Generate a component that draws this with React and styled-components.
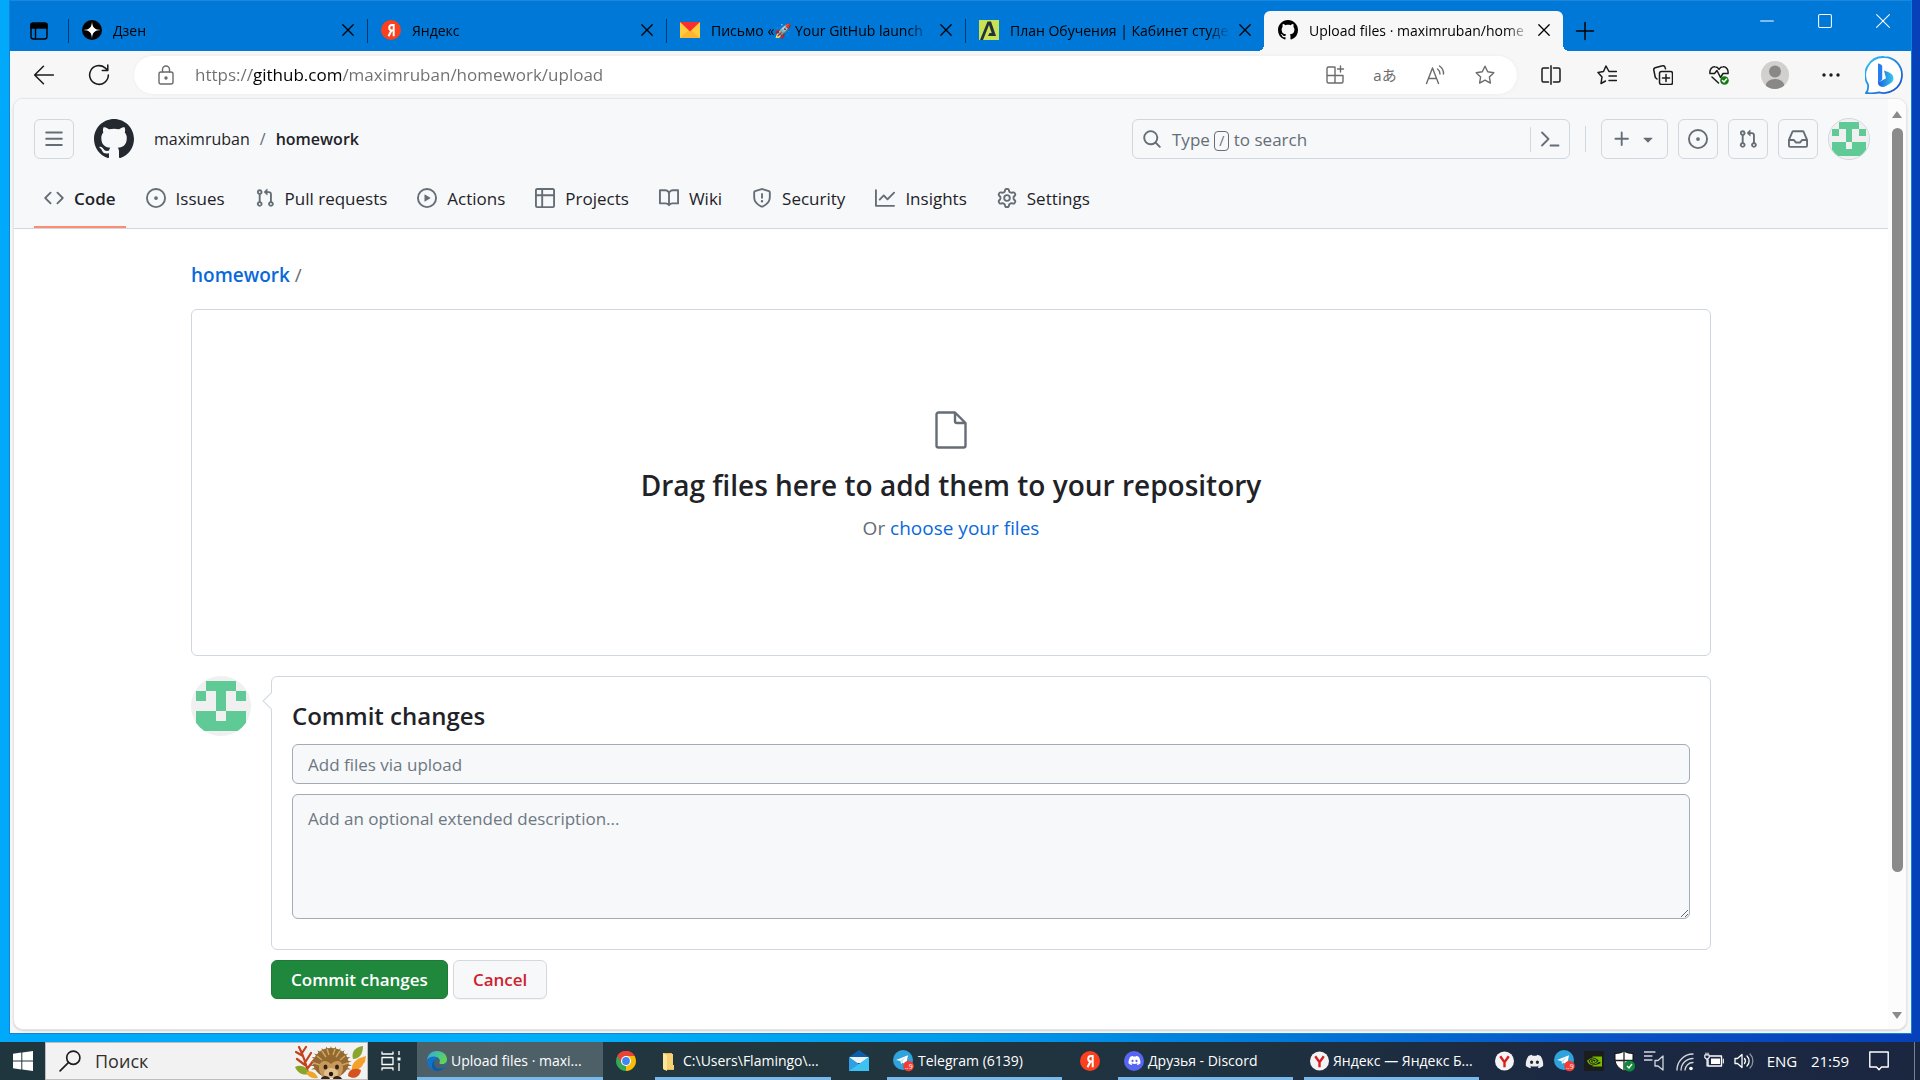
import React from "react";
import styled, { createGlobalStyle, css } from "styled-components";
import { FaDiscord } from "react-icons/fa";
import { SiNvidia } from "react-icons/si";

const GlobalStyle = createGlobalStyle`
  *, *::before, *::after { box-sizing: border-box; }
  html, body, #root { height: 100%; }
  body {
    margin: 0;
    font-family: "Open Sans", "Noto Sans", "Noto Sans CJK JP", sans-serif;
    font-size: 17px;
    color: #1f2328;
  }
  button, input, textarea { font: inherit; color: inherit; }
  button { cursor: pointer; }
  a { text-decoration: none; }
  svg { display: block; flex: none; }
`;

/* ---------- octicons ---------- */

const octicons = {
  code: "m11.28 3.22 4.25 4.25a.75.75 0 0 1 0 1.06l-4.25 4.25a.749.749 0 0 1-1.275-.326.749.749 0 0 1 .215-.734L13.94 8l-3.72-3.72a.749.749 0 0 1 .326-1.275.749.749 0 0 1 .734.215Zm-6.56 0a.751.751 0 0 1 1.042.018.751.751 0 0 1 .018 1.042L2.06 8l3.72 3.72a.749.749 0 0 1-.326 1.275.749.749 0 0 1-.734-.215L.47 8.53a.75.75 0 0 1 0-1.06Z",
  issue: "M8 9.5a1.5 1.5 0 1 0 0-3 1.5 1.5 0 0 0 0 3ZM8 0a8 8 0 1 1 0 16A8 8 0 0 1 8 0ZM1.5 8a6.5 6.5 0 1 0 13 0 6.5 6.5 0 0 0-13 0Z",
  pull: "M1.5 3.25a2.25 2.25 0 1 1 3 2.122v5.256a2.251 2.251 0 1 1-1.5 0V5.372A2.25 2.25 0 0 1 1.5 3.25Zm5.677-.177L9.573.677A.25.25 0 0 1 10 .854V2.5h1A2.5 2.5 0 0 1 13.5 5v5.628a2.251 2.251 0 1 1-1.5 0V5a1 1 0 0 0-1-1h-1v1.646a.25.25 0 0 1-.427.177L7.177 3.427a.25.25 0 0 1 0-.354ZM3.75 2.5a.75.75 0 1 0 0 1.5.75.75 0 0 0 0-1.5Zm0 9.5a.75.75 0 1 0 0 1.5.75.75 0 0 0 0-1.5Zm8.25.75a.75.75 0 1 0 1.5 0 .75.75 0 0 0-1.5 0Z",
  play: "M8 0a8 8 0 1 1 0 16A8 8 0 0 1 8 0ZM1.5 8a6.5 6.5 0 1 0 13 0 6.5 6.5 0 0 0-13 0Zm4.879-2.773 4.264 2.559a.25.25 0 0 1 0 .428l-4.264 2.559A.25.25 0 0 1 6 10.559V5.442a.25.25 0 0 1 .379-.215Z",
  table: "M0 1.75C0 .784.784 0 1.75 0h12.5C15.216 0 16 .784 16 1.75v12.5A1.75 1.75 0 0 1 14.25 16H1.75A1.75 1.75 0 0 1 0 14.25ZM6.5 6.5v8h7.75a.25.25 0 0 0 .25-.25V6.5Zm8-1.5V1.75a.25.25 0 0 0-.25-.25H6.5V5Zm-13 1.5v7.75c0 .138.112.25.25.25H5v-8ZM5 5V1.5H1.75a.25.25 0 0 0-.25.25V5Z",
  book: "M0 1.75A.75.75 0 0 1 .75 1h4.253c1.227 0 2.317.59 3 1.501A3.743 3.743 0 0 1 11.006 1h4.245a.75.75 0 0 1 .75.75v10.5a.75.75 0 0 1-.75.75h-4.507a2.25 2.25 0 0 0-1.591.659l-.622.621a.75.75 0 0 1-1.06 0l-.622-.621A2.25 2.25 0 0 0 5.258 13H.75a.75.75 0 0 1-.75-.75Zm7.251 10.324.004-5.073-.002-2.253A2.25 2.25 0 0 0 5.003 2.5H1.5v9h3.757a3.75 3.75 0 0 1 1.994.574ZM8.755 4.75l-.004 7.322a3.752 3.752 0 0 1 1.992-.572H14.5v-9h-3.495a2.25 2.25 0 0 0-2.25 2.25Z",
  shield: "M7.467.133a1.748 1.748 0 0 1 1.066 0l5.25 1.68A1.75 1.75 0 0 1 15 3.48V7c0 1.566-.32 3.182-1.303 4.682-.983 1.498-2.585 2.813-5.032 3.855a1.697 1.697 0 0 1-1.33 0c-2.447-1.042-4.049-2.357-5.032-3.855C1.32 10.182 1 8.566 1 7V3.48a1.75 1.75 0 0 1 1.217-1.667Zm.61 1.429a.25.25 0 0 0-.153 0l-5.25 1.68a.25.25 0 0 0-.174.238V7c0 1.358.275 2.666 1.057 3.86.784 1.194 2.121 2.34 4.366 3.297a.196.196 0 0 0 .154 0c2.245-.956 3.582-2.104 4.366-3.298C13.225 9.666 13.5 8.36 13.5 7V3.48a.251.251 0 0 0-.174-.237l-5.25-1.68ZM8.75 4.75v3a.75.75 0 0 1-1.5 0v-3a.75.75 0 0 1 1.5 0ZM9 10.5a1 1 0 1 1-2 0 1 1 0 0 1 2 0Z",
  graph: "M1.5 1.75V13.5h13.75a.75.75 0 0 1 0 1.5H.75a.75.75 0 0 1-.75-.75V1.75a.75.75 0 0 1 1.5 0Zm14.28 2.53-5.25 5.25a.75.75 0 0 1-1.06 0L7 7.06 4.28 9.78a.751.751 0 0 1-1.042-.018.751.751 0 0 1-.018-1.042l3.25-3.25a.75.75 0 0 1 1.06 0L10 7.94l4.72-4.72a.751.751 0 0 1 1.042.018.751.751 0 0 1 .018 1.042Z",
  gear: "M8 0a8.2 8.2 0 0 1 .701.031C9.444.095 9.99.645 10.16 1.29l.288 1.107c.018.066.079.158.212.224.231.114.454.243.668.386.123.082.233.09.299.071l1.103-.303c.644-.176 1.392.021 1.82.63.27.385.506.792.704 1.218.315.675.111 1.422-.364 1.891l-.814.806c-.049.048-.098.147-.088.294.016.257.016.515 0 .772-.01.147.038.246.088.294l.814.806c.475.469.679 1.216.364 1.891a7.977 7.977 0 0 1-.704 1.217c-.428.61-1.176.807-1.82.63l-1.102-.302c-.067-.019-.177-.011-.3.071a5.909 5.909 0 0 1-.668.386c-.133.066-.194.158-.211.224l-.29 1.106c-.168.646-.715 1.196-1.458 1.26a8.006 8.006 0 0 1-1.402 0c-.743-.064-1.289-.614-1.458-1.26l-.289-1.106c-.018-.066-.079-.158-.212-.224a5.738 5.738 0 0 1-.668-.386c-.123-.082-.233-.09-.299-.071l-1.103.303c-.644.176-1.392-.021-1.82-.63a8.12 8.12 0 0 1-.704-1.218c-.315-.675-.111-1.422.363-1.891l.815-.806c.05-.048.098-.147.088-.294a6.214 6.214 0 0 1 0-.772c.01-.147-.038-.246-.088-.294l-.815-.806C.635 6.045.431 5.298.746 4.623a7.92 7.92 0 0 1 .704-1.217c.428-.61 1.176-.807 1.82-.63l1.102.302c.067.019.177.011.3-.071.214-.143.437-.272.668-.386.133-.066.194-.158.211-.224l.29-1.106C6.009.645 6.556.095 7.299.03 7.53.01 7.764 0 8 0Zm-.571 1.525c-.036.003-.108.036-.137.146l-.289 1.105c-.147.561-.549.967-.998 1.189-.173.086-.34.183-.5.29-.417.278-.97.423-1.529.27l-1.103-.303c-.109-.03-.175.016-.195.045-.22.312-.412.644-.573.99-.014.031-.021.11.059.19l.815.806c.411.406.562.957.53 1.456a4.709 4.709 0 0 0 0 .582c.032.499-.119 1.05-.53 1.456l-.815.806c-.081.08-.073.159-.059.19.162.346.353.677.573.989.02.03.085.076.195.046l1.102-.303c.56-.153 1.113-.008 1.53.27.161.107.328.204.501.29.447.222.85.629.997 1.189l.289 1.105c.029.109.101.143.137.146a6.6 6.6 0 0 0 1.142 0c.036-.003.108-.036.137-.146l.289-1.105c.147-.561.549-.967.998-1.189.173-.086.34-.183.5-.29.417-.278.97-.423 1.529-.27l1.103.303c.109.029.175-.016.195-.045.22-.313.411-.644.573-.99.014-.031.021-.11-.059-.19l-.815-.806c-.411-.406-.562-.957-.53-1.456a4.709 4.709 0 0 0 0-.582c-.032-.499.119-1.05.53-1.456l.815-.806c.081-.08.073-.159.059-.19a6.464 6.464 0 0 0-.573-.989c-.02-.03-.085-.076-.195-.046l-1.102.303c-.56.153-1.113.008-1.53-.27a4.44 4.44 0 0 0-.501-.29c-.447-.222-.85-.629-.997-1.189l-.289-1.105c-.029-.11-.101-.143-.137-.146a6.6 6.6 0 0 0-1.142 0ZM11 8a3 3 0 1 1-6 0 3 3 0 0 1 6 0ZM9.5 8a1.5 1.5 0 1 0-3.001.001A1.5 1.5 0 0 0 9.5 8Z",
  inbox: "M2.8 2.06A1.75 1.75 0 0 1 4.41 1h7.18c.7 0 1.333.417 1.61 1.06l2.74 6.395c.04.093.06.194.06.295v4.5A1.75 1.75 0 0 1 14.25 15H1.75A1.75 1.75 0 0 1 0 13.25v-4.5c0-.101.02-.202.06-.295Zm1.61.44a.25.25 0 0 0-.23.152L1.887 8H4.75a.75.75 0 0 1 .6.3L6.625 10h2.75l1.275-1.7a.75.75 0 0 1 .6-.3h2.863L11.82 2.652a.25.25 0 0 0-.23-.152Zm10.09 7h-2.875l-1.275 1.7a.75.75 0 0 1-.6.3h-3.5a.75.75 0 0 1-.6-.3L4.375 9.5H1.5v3.75c0 .138.112.25.25.25h12.5a.25.25 0 0 0 .25-.25Z",
  search: "M10.68 11.74a6 6 0 0 1-7.922-8.982 6 6 0 0 1 8.982 7.922l3.04 3.04a.749.749 0 0 1-.326 1.275.749.749 0 0 1-.734-.215ZM11.5 7a4.499 4.499 0 1 0-8.997 0A4.499 4.499 0 0 0 11.5 7Z",
  mark: "M8 0c4.42 0 8 3.58 8 8a8.013 8.013 0 0 1-5.45 7.59c-.4.08-.55-.17-.55-.38 0-.27.01-1.13.01-2.2 0-.75-.25-1.23-.54-1.48 1.78-.2 3.65-.88 3.65-3.95 0-.88-.31-1.59-.82-2.15.08-.2.36-1.02-.08-2.12 0 0-.67-.22-2.2.82-.64-.18-1.32-.27-2-.27-.68 0-1.36.09-2 .27-1.53-1.03-2.2-.82-2.2-.82-.44 1.1-.16 1.92-.08 2.12-.51.56-.82 1.28-.82 2.15 0 3.06 1.86 3.75 3.64 3.95-.23.2-.44.55-.51 1.07-.46.21-1.61.55-2.33-.66-.15-.24-.6-.83-1.23-.82-.67.01-.27.38.01.53.34.19.73.9.82 1.13.16.45.68 1.31 2.69.94 0 .67.01 1.3.01 1.49 0 .21-.15.45-.55.38A7.995 7.995 0 0 1 0 8c0-4.42 3.58-8 8-8Z",
  bars: "M1 2.75A.75.75 0 0 1 1.75 2h12.5a.75.75 0 0 1 0 1.5H1.75A.75.75 0 0 1 1 2.75Zm0 5A.75.75 0 0 1 1.75 7h12.5a.75.75 0 0 1 0 1.5H1.75A.75.75 0 0 1 1 7.75ZM1.75 12h12.5a.75.75 0 0 1 0 1.5H1.75a.75.75 0 0 1 0-1.5Z",
  plus: "M7.75 2a.75.75 0 0 1 .75.75V7h4.25a.75.75 0 0 1 0 1.5H8.5v4.25a.75.75 0 0 1-1.5 0V8.5H2.75a.75.75 0 0 1 0-1.5H7V2.75A.75.75 0 0 1 7.75 2Z",
  caret: "m4.427 7.427 3.396 3.396a.25.25 0 0 0 .354 0l3.396-3.396A.25.25 0 0 0 11.396 7H4.604a.25.25 0 0 0-.177.427Z",
};

const Octicon = ({ name, size = 20 }) => (
  <svg width={size} height={size} viewBox="0 0 16 16" fill="currentColor" aria-hidden="true">
    <path d={octicons[name]} />
  </svg>
);

/* Thin-stroke glyph used by the browser chrome and the tray */
const Line = ({ size = 20, w = 1.4, children }) => (
  <svg
    width={size}
    height={size}
    viewBox="0 0 20 20"
    fill="none"
    stroke="currentColor"
    strokeWidth={w}
    strokeLinecap="round"
    strokeLinejoin="round"
    aria-hidden="true"
  >
    {children}
  </svg>
);

const identiconCells = [
  [1, 0], [2, 0], [3, 0],
  [0, 1], [2, 1], [4, 1],
  [2, 2],
  [0, 3], [1, 3], [3, 3], [4, 3],
  [0, 4], [1, 4], [2, 4], [3, 4], [4, 4],
];

const Identicon = ({ size }) => (
  <svg width={size} height={size} viewBox="0 0 60 60" shapeRendering="crispEdges" aria-hidden="true">
    <rect width="60" height="60" fill="#f0f0f0" />
    {identiconCells.map(([x, y]) => (
      <rect key={`${x}-${y}`} x={5 + x * 10} y={5 + y * 10} width="10" height="10" fill="#5fca96" />
    ))}
  </svg>
);

/* ---------- shell ---------- */

const Desktop = styled.div`
  min-height: 100%;
  display: flex;
  flex-direction: column;
  background: linear-gradient(90deg, #00a9fa 0%, #00aef8 30%, #009cec 50%, #0078d8 67%, #0a50c4 85%, #0540b8 100%);
`;

const BrowserWindow = styled.section`
  flex: 1;
  display: flex;
  flex-direction: column;
  margin: 0 8px 8px 9px;
  background: #f7f7f7;
  border: 1px solid #1084dc;
  border-top-color: #1a86dc;
`;

const IconButton = styled.button`
  display: grid;
  place-items: center;
  width: ${(p) => p.$w || 32}px;
  height: ${(p) => p.$h || 32}px;
  flex: none;
  padding: 0;
  border: 0;
  background: none;
  font-size: 15px;
  color: ${(p) => p.$color || "#1b1b1b"};
`;

/* ---------- tab strip ---------- */

const TabStrip = styled.div`
  display: flex;
  align-items: flex-end;
  height: 50px;
  background: #0078d7;
  padding-left: 6px;
`;

const TabActions = styled.div`
  display: flex;
  align-items: center;
  height: 40px;
  width: 52px;
  padding-left: 7px;
`;

const Tab = styled.div`
  position: relative;
  display: flex;
  align-items: center;
  flex: 0 1 299px;
  min-width: 0;
  height: 40px;
  padding: 0 5px 2px 14px;
  font-size: 14px;
  color: #000;

  &::before {
    content: "";
    position: absolute;
    left: 0;
    top: 8px;
    height: 24px;
    width: 1px;
    background: #003a6c;
  }

  ${(p) =>
    p.$active &&
    css`
      background: #f7f7f7;
      border-radius: 6px 6px 0 0;
      &::before {
        top: auto;
        bottom: 0;
        left: -6px;
        width: 6px;
        height: 6px;
        background: radial-gradient(circle at 0 0, transparent 6px, #f7f7f7 6px);
      }
      &::after {
        content: "";
        position: absolute;
        bottom: 0;
        right: -6px;
        width: 6px;
        height: 6px;
        background: radial-gradient(circle at 100% 0, transparent 6px, #f7f7f7 6px);
      }
    `}
`;

const TabTitle = styled.button`
  display: flex;
  align-items: center;
  gap: 11px;
  flex: 1;
  min-width: 0;
  height: 100%;
  padding: 0;
  border: 0;
  background: none;
  text-align: left;
`;

const TabText = styled.span`
  flex: 1;
  overflow: hidden;
  white-space: nowrap;
  mask-image: linear-gradient(90deg, #000 calc(100% - 24px), transparent);
`;

const WindowControls = styled.div`
  display: flex;
  align-self: flex-start;
  margin-left: auto;
`;

const CloseGlyph = () => (
  <Line size={16} w={1.6}>
    <path d="M3.500 3.500 16.500 16.500M16.500 3.500 3.500 16.500" />
  </Line>
);

const ZenIcon = () => (
  <svg width="20" height="20" viewBox="0 0 20 20" aria-hidden="true">
    <circle cx="10" cy="10" r="10" fill="#000" />
    <path d="M10 1c.2 6.500 2.500 8.800 9 9-6.500.2-8.800 2.500-9 9-.2-6.500-2.500-8.800-9-9 6.500-.2 8.800-2.500 9-9Z" fill="#fff" />
  </svg>
);

const YandexIcon = () => (
  <svg width="20" height="20" viewBox="0 0 20 20" aria-hidden="true">
    <circle cx="10" cy="10" r="10" fill="#fc3f1d" />
    <path d="M12.700 4v12.300M12.700 4.900h-1.700c-3.700 0-3.700 5.600 0 5.600h1.700M10.400 10.500 7.500 16.300" fill="none" stroke="#fff" strokeWidth="2" />
  </svg>
);

const MailTabIcon = () => (
  <svg width="20" height="20" viewBox="0 0 20 20" aria-hidden="true">
    <path d="M0 2h20v16H0z" fill="#ffcc3d" />
    <path d="M0 18h20L10 9Z" fill="#ffb52e" />
    <path d="M0 2h20L10 11.500Z" fill="#f8312f" />
  </svg>
);

const PlanIcon = () => (
  <svg width="20" height="20" viewBox="0 0 20 20" aria-hidden="true">
    <path d="M0 0h20v20H0z" fill="#c5e352" />
    <path d="M1 20 8.500 1.500h3.500L17 16H9l1.500-3h2.200L10 5 4 20Z" fill="#263038" />
  </svg>
);

const tabs = [
  { icon: <ZenIcon />, title: "Дзен" },
  { icon: <YandexIcon />, title: "Яндекс" },
  { icon: <MailTabIcon />, title: "Письмо «🚀 Your GitHub launch" },
  { icon: <PlanIcon />, title: "План Обучения | Кабинет студе" },
  { icon: <Octicon name="mark" />, title: "Upload files · maximruban/home", active: true },
];

/* ---------- address bar ---------- */

const Toolbar = styled.div`
  display: flex;
  align-items: center;
  height: 47px;
  padding-left: 6px;
  padding-right: 2px;
`;

const NavButtons = styled.div`
  display: flex;
  width: 118px;
`;

const Omnibox = styled.form`
  display: flex;
  align-items: center;
  flex: 1;
  height: 38px;
  padding: 0 7px 0 16px;
  border-radius: 19px;
  background: #fff;
  box-shadow: 0 0 4px #0000000d;
`;

const UrlInput = styled.input`
  flex: 1;
  min-width: 0;
  padding: 0;
  margin-left: 13px;
  border: 0;
  outline: 0;
  font-size: 17px;
  color: transparent;
  background: linear-gradient(90deg, #6f6f6f 57px, #000 57px, #000 147px, #6f6f6f 147px);
  background-clip: text;
`;

const ToolGroup = styled.div`
  display: flex;
  align-items: center;
  padding-left: 6px;
`;

const Profile = styled.span`
  display: block;
  width: 28px;
  height: 28px;
  border-radius: 50%;
  overflow: hidden;
`;

/* ---------- viewport ---------- */

const Viewport = styled.div`
  flex: 1;
  display: flex;
  margin: 0 4px 3px 3px;
  border: 1px solid #e6e6e6;
  border-radius: 10px;
  overflow: hidden;
  background: #fff;
  box-shadow: 0 1px 2px #00000026;
`;

const Page = styled.div`
  flex: 1;
  min-width: 0;
`;

const ScrollTrack = styled.div`
  display: flex;
  flex-direction: column;
  align-items: center;
  width: 18px;
  padding: 12px 0 10px;
  background: #fcfcfc;
  color: #8b8b8b;
`;

const Thumb = styled.div`
  flex: 747;
  width: 11px;
  margin-top: 10px;
  border-radius: 6px;
  background: currentColor;
`;

const TrackRest = styled.div`
  flex: 140;
`;

const Arrow = styled.span`
  border: 5px solid transparent;
  ${(p) => (p.$up ? "border-top: 0; border-bottom: 7px solid currentColor;" : "border-bottom: 0; border-top: 7px solid currentColor;")}
`;

const Header = styled.header`
  background: #f6f8fa;
  border-bottom: 1px solid #d0d7de;
`;

const HeaderRow = styled.div`
  display: flex;
  align-items: center;
  gap: 10px;
  padding: 19px 18px 0 20px;
`;

const HeaderButton = styled.button`
  display: flex;
  align-items: center;
  justify-content: center;
  gap: 6px;
  width: ${(p) => (p.$wide ? 67 : 40)}px;
  height: 40px;
  flex: none;
  padding: 0;
  border: 1px solid #d0d7de;
  border-radius: 6px;
  background: #f6f8fa;
  color: #656d76;
`;

const LogoLink = styled.a`
  color: #24292f;
  margin: 0 10px;
`;

const Breadcrumb = styled.nav`
  display: flex;
  gap: 10px;
  margin-right: auto;
  font-size: 16px;
  color: #656d76;
  a { color: #1f2328; }
  a:last-child { font-weight: 600; }
`;

const SearchBox = styled.div`
  display: flex;
  align-items: center;
  width: 438px;
  height: 40px;
  border: 1px solid #d0d7de;
  border-radius: 6px;
  color: #656d76;
`;

const SearchButton = styled.button`
  display: flex;
  align-items: center;
  gap: 10px;
  flex: 1;
  padding: 0 9px;
  border: 0;
  background: none;
`;

const Kbd = styled.kbd`
  display: inline-block;
  font: inherit;
  font-size: 14px;
  line-height: 18px;
  padding: 0 4px;
  border: 1px solid #656d76;
  border-radius: 4px;
`;

const CommandButton = styled.button`
  display: grid;
  place-items: center;
  width: 39px;
  height: 25px;
  padding: 0;
  border: 0;
  border-left: 1px solid #d0d7de;
  background: none;
`;

const Divider = styled.span`
  width: 1px;
  height: 26px;
  margin: 0 5px;
  background: #d0d7de;
`;

const AvatarButton = styled.button`
  display: block;
  width: ${(p) => p.$size}px;
  height: ${(p) => p.$size}px;
  padding: 0;
  border: 1px solid #d0d7de;
  border-radius: 50%;
  overflow: hidden;
  flex: none;
`;

const RepoNav = styled.nav`
  display: flex;
  gap: 10px;
  padding: 10px 20px 0;
`;

const RepoTab = styled.a`
  display: flex;
  align-items: center;
  gap: 10px;
  height: 58px;
  padding: 0 10px;
  color: #1f2328;
  border-bottom: 2px solid ${(p) => (p.$active ? "#fd8c73" : "transparent")};
  font-weight: ${(p) => (p.$active ? 600 : 400)};
  svg { color: #656d76; }
`;

const repoTabs = [
  ["code", "Code"],
  ["issue", "Issues"],
  ["pull", "Pull requests"],
  ["play", "Actions"],
  ["table", "Projects"],
  ["book", "Wiki"],
  ["shield", "Security"],
  ["graph", "Insights"],
  ["gear", "Settings"],
];

/* ---------- upload page ---------- */

const Main = styled.main`
  max-width: 1600px;
  margin: 0 auto;
  padding: 31px 40px 0;
`;

const PathLine = styled.nav`
  font-size: 19px;
  line-height: 30px;
  margin-bottom: 19px;
  color: #656d76;
  a { color: #0969da; font-weight: 600; }
`;

const DropZone = styled.section`
  display: flex;
  flex-direction: column;
  align-items: center;
  padding: 100px 20px 107px;
  border: 1px solid #d0d7de;
  border-radius: 6px;
  svg { color: #656d76; }
`;

const DropTitle = styled.h1`
  margin: 13px 0 0;
  font-size: 28px;
  line-height: 45px;
  font-weight: 600;
`;

const DropHint = styled.p`
  margin: 0;
  font-size: 19px;
  line-height: 40px;
  color: #656d76;
  label { color: #0969da; cursor: pointer; }
  input { display: none; }
`;

const CommitRow = styled.form`
  display: flex;
  align-items: flex-start;
  gap: 20px;
  margin-top: 20px;
`;

const Round = styled.span`
  display: block;
  width: 60px;
  height: 60px;
  border-radius: 50%;
  overflow: hidden;
`;

const CommitColumn = styled.div`
  flex: 1;
  min-width: 0;
`;

const CommitBox = styled.div`
  position: relative;
  display: flex;
  flex-direction: column;
  gap: 10px;
  padding: 20px 20px 30px;
  border: 1px solid #d0d7de;
  border-radius: 6px;

  &::before {
    content: "";
    position: absolute;
    left: -7px;
    top: 18px;
    width: 12px;
    height: 12px;
    border-left: 1px solid #d0d7de;
    border-bottom: 1px solid #d0d7de;
    background: #fff;
    transform: rotate(45deg);
  }
`;

const CommitTitle = styled.h2`
  margin: 0;
  font-size: 24px;
  line-height: 37px;
  font-weight: 600;
`;

const field = css`
  width: 100%;
  border: 1px solid #a2abb6;
  border-radius: 6px;
  background: #f6f8fa;
  padding: 0 15px;
  outline: 0;
  &::placeholder { color: #6e7781; opacity: 1; }
`;

const SummaryInput = styled.input`
  ${field}
  height: 40px;
`;

const DescriptionInput = styled.textarea`
  ${field}
  display: block;
  height: 125px;
  padding-top: 11px;
  line-height: 26px;
  resize: vertical;
`;

const Actions = styled.div`
  display: flex;
  gap: 5px;
  margin-top: 10px;
`;

const ActionButton = styled.button`
  height: 39px;
  padding: 0 19px;
  border: 1px solid ${(p) => (p.$primary ? "#1c7c37" : "#d5d9de")};
  border-radius: 6px;
  font-size: 17px;
  background: ${(p) => (p.$primary ? "#1f883d" : "#f6f8fa")};
  color: ${(p) => (p.$primary ? "#fff" : "#cf222e")};
  font-weight: 600;
  box-shadow: 0 1px 0 #1f23280a;
`;

/* ---------- taskbar ---------- */

const Taskbar = styled.footer`
  display: flex;
  height: 38px;
  color: #fff;
  font-size: 15px;
  background: linear-gradient(90deg, #20363f 0%, #22363f 40%, #1e3140 66%, #1b2842 82%, #1b2740 100%);
`;

const TaskSearch = styled.label`
  display: flex;
  align-items: center;
  gap: 14px;
  width: 323px;
  padding-left: 13px;
  border: 1px solid #bdbdbd;
  background: #f2f2f2;
  color: #1c1c1c;
  input {
    flex: 1;
    min-width: 0;
    padding: 0;
    border: 0;
    outline: 0;
    background: none;
    font-size: 18px;
  }
  input::placeholder { color: #303030; opacity: 1; }
`;

const TaskButton = styled.button`
  display: flex;
  align-items: center;
  gap: 4px;
  width: ${(p) => p.$w}px;
  flex: none;
  padding: 2px 6px 0;
  border: 0;
  border-bottom: 3px solid ${(p) => (p.$open ? "#76b9ed" : "transparent")};
  background: ${(p) => (p.$active ? "#4d6068" : "none")};
  color: #fff;
  font-size: 14px;
  white-space: nowrap;
  ${(p) => p.$center && "justify-content: center;"}
  ${(p) => p.$active && "padding-left: 10px;"}
`;

const TaskGap = styled.span`
  width: ${(p) => p.$w}px;
`;

const Tray = styled.div`
  display: flex;
  align-items: center;
  margin-left: auto;
`;

const TrayText = styled.button`
  width: ${(p) => p.$w}px;
  padding: 0;
  border: 0;
  background: none;
  text-align: center;
`;

const ShowDesktop = styled.button`
  width: 6px;
  height: 100%;
  margin-left: 11px;
  padding: 0;
  border: 0;
  border-left: 1px solid #77808f;
  background: none;
`;

const Hedgehog = () => {
  const spikes = Array.from({ length: 17 }, (_, i) => {
    const a = Math.PI * (0.9 + (i * 1.2) / 16);
    const p = (r, d) => `${36 + r * Math.cos(a + d)},${21 + r * 0.86 * Math.sin(a + d)}`;
    return <polygon key={i} points={`${p(21, 0)} ${p(14, 0.16)} ${p(14, -0.16)}`} fill={i % 2 ? "#8b6331" : "#a57a3e"} />;
  });
  return (
    <svg width="72" height="36" viewBox="0 0 72 36" aria-hidden="true">
      <path d="M13 30C11 20 8 12 4 4M10 22 2 16M11 18l5-8M8 13 1 9M7 10l4-6M12 26l7-9" stroke="#c2431b" strokeWidth="2.200" strokeLinecap="round" fill="none" />
      <path d="M0 24c6-3 12 0 15 7C7 33 3 30 0 24Z" fill="#8aa329" />
      <path d="M11 29c5-2 10 1 12 6-6 1-10-1-12-6Z" fill="#efa52a" />
      {spikes}
      <ellipse cx="36" cy="20" rx="17.500" ry="15" fill="#94692f" />
      <path d="M22 13l5 4M27 8l4 6M32 6l2 6M40 6l-2 6M45 8l-4 6M50 13l-5 4M19 20l6 2M53 20l-6 2" stroke="#cda461" strokeWidth="1.500" />
      <path d="M24 25c0-8 7-9 12-4 5-5 12-4 12 4 0 7-5 10-12 10s-12-3-12-10Z" fill="#c79a5c" />
      <ellipse cx="36" cy="30" rx="7" ry="5" fill="#e2c08b" />
      <ellipse cx="30.500" cy="24" rx="2" ry="2.600" fill="#352015" />
      <ellipse cx="42" cy="24" rx="2" ry="2.600" fill="#352015" />
      <circle cx="36" cy="31" r="2.200" fill="#201510" />
      <path d="M26 36c0-4 8-4 9 0ZM38 36c0-4 8-4 9 0Z" fill="#3a231a" />
      <path d="M58 16c-2-7 2-12 10-13 0 7-3 13-10 13Z" fill="#8aa52d" />
      <path d="M57 28c-1-8 4-10 6-12 3-2 6-2 8-3-1 4 0 6-3 8-1 4-6 6-11 7Z" fill="#f5a02b" />
      <path d="M53 33c0-6 6-9 13-6-1 7-7 10-13 6Z" fill="#d3541f" />
    </svg>
  );
};

const EdgeIcon = () => (
  <svg width="20" height="20" viewBox="0 0 20 20" aria-hidden="true">
    <defs>
      <linearGradient id="edgeTop" x1="0" y1="0" x2="1" y2="0.500">
        <stop offset="0" stopColor="#2aa9e8" />
        <stop offset="1" stopColor="#62d553" />
      </linearGradient>
    </defs>
    <circle cx="10" cy="10" r="10" fill="#1272c8" />
    <path d="M0 9C1 3 5 0 10 0c6 0 10 4 10 8.500 0 3-2.500 4.800-5.200 4.800-2 0-3-.8-2.600-1.600.6-1 .8-1.800.4-3C11.800 6.600 9.500 5.500 6.500 5.500 3.500 5.500 1 7 0 9Z" fill="url(#edgeTop)" />
    <path d="M7 12c0-2.500 1.500-4.200 3.200-4.800 2 .5 3 2.400 2 4.500-.4.800.6 1.600 2.600 1.600 1.500 0 2.700-.4 3.500-1 .8 2-2.300 5.400-5.800 5.400C9 17.700 7 15 7 12Z" fill="#4d6068" />
    <path d="M7 12c0 3 2 5.700 5.500 5.700 2 0 4-.9 5.300-2C16.200 18.500 13.400 20 10 20c-3 0-5-2.500-5-5.500C5 12 6.500 9.500 9 7.800 7.800 9 7 10.500 7 12Z" fill="#0c5aa6" />
  </svg>
);

const ChromeIcon = () => (
  <svg width="20" height="20" viewBox="0 0 20 20" aria-hidden="true">
    <path d="M10 10 1.340 5A10 10 0 0 1 18.660 5Z" fill="#ea4335" />
    <path d="M10 10 18.660 5A10 10 0 0 1 10 20Z" fill="#fbbc05" />
    <path d="M10 10V20A10 10 0 0 1 1.340 5Z" fill="#34a853" />
    <path d="M10 5h8.660L13.800 13 10 10Z" fill="#fbbc05" />
    <path d="M10 5h8.660A10 10 0 0 0 1.340 5l4.300 7Z" fill="#ea4335" />
    <circle cx="10" cy="10" r="5" fill="#fff" />
    <circle cx="10" cy="10" r="3.900" fill="#4285f4" />
  </svg>
);

const FolderIcon = () => (
  <svg width="18" height="20" viewBox="0 0 18 20" aria-hidden="true">
    <path d="M2 2h9v12h2v5H3Z" fill="#e9bb55" />
    <path d="M2 2l4 2v16l-4-2Z" fill="#ffe59a" />
    <path d="M6 3h6v11h1v4H6Z" fill="#f7d274" />
  </svg>
);

const MailIcon = () => (
  <svg width="20" height="22" viewBox="0 0 20 22" aria-hidden="true">
    <path d="M0 7 10 0l10 7v3H0Z" fill="#0a5fa8" />
    <path d="M1 7h18v6H1Z" fill="#f1f1f1" />
    <path d="M0 7l10 7L20 7v14H0Z" fill="#2f9fe4" />
    <path d="M0 21 20 7v14Z" fill="#3dc2f4" />
  </svg>
);

const TelegramIcon = () => (
  <svg width="21" height="22" viewBox="0 0 21 22" aria-hidden="true">
    <circle cx="10" cy="10" r="10" fill="#2ea3dc" />
    <path d="M3 10 15 5.200 13 15l-3.500-2.500L8 14l-.5-3Z" fill="#fff" />
    <path d="m7.500 11 5-4-3.500 5Z" fill="#b9d9ec" />
    <circle cx="15.500" cy="16" r="5.300" fill="#f23c34" />
    <text x="12" y="19" fontSize="7" fill="#fff" fontFamily="Open Sans">..9</text>
  </svg>
);

const DiscordBadge = styled.span`
  display: grid;
  place-items: center;
  width: 20px;
  height: 20px;
  border-radius: 50%;
  background: #5865f2;
`;

const YBrowserIcon = () => (
  <svg width="19" height="20" viewBox="0 0 20 20" aria-hidden="true">
    <circle cx="10" cy="10" r="10" fill="#f4f4f4" />
    <path d="M5.500 5 10 11.200 14.500 5M10 11v5.500" fill="none" stroke="#d6201f" strokeWidth="2.500" />
  </svg>
);

const NvidiaBadge = styled.span`
  display: grid;
  place-items: center;
  width: 20px;
  height: 20px;
  background: #1b1d1c;
  color: #76b900;
`;

const DefenderIcon = () => (
  <svg width="21" height="21" viewBox="0 0 21 21" aria-hidden="true">
    <path d="M10 0c2.500 1.800 5.500 2.500 9 2.500V8c0 6-4 9.500-9 12C5 17.500 1 14 1 8V2.500C4.500 2.500 7.500 1.800 10 0Z" fill="#fff" stroke="#111" />
    <path d="M10 1v18M1 9.500h18" stroke="#222" strokeWidth="1.300" />
    <circle cx="15.500" cy="15" r="5.500" fill="#10893e" />
    <path d="m13 15 2 2 3-4" fill="none" stroke="#fff" strokeWidth="1.300" />
  </svg>
);

const WindowsIcon = () => (
  <svg width="20" height="20" viewBox="0 0 20 20" fill="#fff" aria-hidden="true">
    <path d="M0 2.800 8.300 1.600v7.900H0ZM9.300 1.500 20 0v9.500H9.300ZM0 10.500h8.300v7.900L0 17.200ZM9.300 10.500H20V20L9.300 18.500Z" />
  </svg>
);

const BingIcon = () => (
  <svg width="38" height="38" viewBox="0 0 38 38" aria-hidden="true">
    <defs>
      <linearGradient id="bingRing" x1="0" y1="0" x2="1" y2="1">
        <stop offset="0" stopColor="#2bc5f5" />
        <stop offset="1" stopColor="#1b49c9" />
      </linearGradient>
      <linearGradient id="bingB" x1="0" y1="0" x2="1" y2="0">
        <stop offset="0" stopColor="#1e5fdc" />
        <stop offset="1" stopColor="#35c8ee" />
      </linearGradient>
    </defs>
    <path d="M19 1a18 18 0 1 1-5 35.300C9 37.500 5 37.500 1 37c2-2 2.500-4 2-8.500A18 18 0 0 1 19 1Z" fill="#fff" stroke="url(#bingRing)" strokeWidth="1.800" />
    <path d="M13 7.500c2 .4 4.200 1 4.200 3v13L13 27.500Z" fill="#2a7df0" />
    <path d="M19 14.500c3 1 9 2.500 9.500 7.500.2 2.500-1.500 4.500-4 6-3 1.800-5.500 3.500-8 2.800-2.200-.6-3.500-2-3.500-4l8-4.600Z" fill="url(#bingB)" />
  </svg>
);

/* ---------- app ---------- */

export default function App() {
  return (
    <>
      <GlobalStyle />
      <Desktop>
        <BrowserWindow>
          <TabStrip>
            <TabActions>
              <IconButton aria-label="Tab actions" $color="#000">
                <Line>
                  <rect x="2" y="2" width="16" height="16" rx="2.500" />
                  <path d="M2 3h16v4H2Z" fill="currentColor" />
                  <path d="M6.500 7v11" />
                </Line>
              </IconButton>
            </TabActions>
            {tabs.map((t, i) => (
              <Tab key={i} $active={t.active}>
                <TabTitle>
                  {t.icon}
                  <TabText>{t.title}</TabText>
                </TabTitle>
                <IconButton aria-label="Close tab" $w={28} $h={28} $color="#000">
                  <CloseGlyph />
                </IconButton>
              </Tab>
            ))}
            <IconButton aria-label="New tab" $w={44} $h={40} $color="#000">
              <Line w={1.5}>
                <path d="M10 1.500v17M1.500 10h17" />
              </Line>
            </IconButton>
            <WindowControls>
              <IconButton aria-label="Minimize" $w={58} $h={40} $color="#fff">
                <Line size={16} w={1.3}><path d="M2 10h16" /></Line>
              </IconButton>
              <IconButton aria-label="Maximize" $w={58} $h={40} $color="#fff">
                <Line size={16} w={1.3}><rect x="2" y="2" width="16" height="16" rx="1.500" /></Line>
              </IconButton>
              <IconButton aria-label="Close" $w={57} $h={40} $color="#fff">
                <Line size={16} w={1.3}><path d="m2 2 16 16M18 2 2 18" /></Line>
              </IconButton>
            </WindowControls>
          </TabStrip>

          <Toolbar>
            <NavButtons>
              <IconButton aria-label="Back" $w={55}>
                <Line size={22}><path d="M18.500 10h-17M9.500 2 1.500 10l8 8" /></Line>
              </IconButton>
              <IconButton aria-label="Refresh" $w={55}>
                <Line size={22}><path d="M18.500 10A8.500 8.500 0 1 1 15.500 3.500L18 5.800M18 1v5h-5" /></Line>
              </IconButton>
            </NavButtons>
            <Omnibox onSubmit={(e) => e.preventDefault()}>
              <IconButton type="button" aria-label="Site information" $color="#6b6b6b">
                <Line>
                  <rect x="3" y="7" width="14" height="12" rx="2" />
                  <path d="M6.500 7V4.500a3.500 3.500 0 0 1 7 0V7" />
                  <circle cx="10" cy="13" r="1" fill="currentColor" />
                </Line>
              </IconButton>
              <UrlInput aria-label="Address" defaultValue="https://github.com/maximruban/homework/upload" />
              <IconButton type="button" aria-label="Apps" $w={50} $color="#6b6b6b">
                <Line>
                  <path d="M9 2H3.500A1.500 1.500 0 0 0 2 3.500v13A1.500 1.500 0 0 0 3.500 18h13a1.500 1.500 0 0 0 1.500-1.500V10.500H2M10 2v16M10 2v8M15.500 1v6M12.500 4h6" />
                </Line>
              </IconButton>
              <IconButton type="button" aria-label="Translate" $w={50} $color="#6b6b6b">aあ</IconButton>
              <IconButton type="button" aria-label="Read aloud" $w={50} $color="#6b6b6b">
                <Line>
                  <path d="M1.500 18.500 7.500 3l6 15.500M3.500 13.500h8M12.500 4a6 6 0 0 1 2.500 5M14.500 1a9 9 0 0 1 4 8" />
                </Line>
              </IconButton>
              <IconButton type="button" aria-label="Add to favorites" $w={50} $color="#6b6b6b">
                <Line>
                  <path d="m10 1.200 2.700 5.600 6.100.9-4.400 4.300 1 6.100-5.400-2.900-5.400 2.900 1-6.100L1.200 7.700l6.100-.9Z" />
                </Line>
              </IconButton>
            </Omnibox>
            <ToolGroup>
              <IconButton aria-label="Split screen" $w={56}>
                <Line w={1.5}>
                  <path d="M7.500 3H2.500A1.500 1.500 0 0 0 1 4.500v11A1.500 1.500 0 0 0 2.500 17H7.500M12.500 3h5A1.500 1.500 0 0 1 19 4.500v11a1.500 1.500 0 0 1-1.500 1.500h-5M10 .8v18.400" />
                </Line>
              </IconButton>
              <IconButton aria-label="Favorites" $w={56}>
                <Line w={1.5}>
                  <path d="M12 6.500 9 1 6.500 6.500 1 7.500 5 12l-1 6.500L8.500 16M12 6.500h7.500M12 11h7.500M12 15.500h7.500" />
                </Line>
              </IconButton>
              <IconButton aria-label="Collections" $w={56}>
                <Line w={1.5}>
                  <rect x="6.500" y="6.500" width="13" height="13" rx="2" />
                  <path d="M13 9.500v7M9.500 13h7M4 14 2.300 12.500 .8 5A2 2 0 0 1 2.200 2.700L9.500.8A2 2 0 0 1 12 2.200l.5 1.500" />
                </Line>
              </IconButton>
              <IconButton aria-label="Browser essentials" $w={56}>
                <Line w={1.5}>
                  <path d="M1 8.500C.3 4.500 3 1.500 6 1.800c1.800.1 3.100 1 4 2.500.9-1.500 2.200-2.400 4-2.500 3-.3 5.700 2.700 5 6.700M1 8.500h4.500L8 5.500l3.500 7 2.500-4h5M3 12l6.500 6" />
                  <circle cx="15.500" cy="15.500" r="4.300" fill="#107c10" stroke="none" />
                  <path d="m13.500 15.500 1.500 1.500 2.600-3" stroke="#fff" />
                </Line>
              </IconButton>
              <IconButton aria-label="Profile" $w={56}>
                <Profile>
                  <svg width="28" height="28" viewBox="0 0 28 28" aria-hidden="true">
                    <path d="M0 0h28v28H0z" fill="#d2d0ce" />
                    <circle cx="14" cy="10.500" r="6" fill="#8a8886" />
                    <ellipse cx="14" cy="25" rx="9.500" ry="7" fill="#8a8886" />
                  </svg>
                </Profile>
              </IconButton>
              <IconButton aria-label="Settings and more" $w={56}>
                <Line>
                  <g fill="currentColor" stroke="none">
                    <circle cx="3" cy="10" r="1.700" />
                    <circle cx="10" cy="10" r="1.700" />
                    <circle cx="17" cy="10" r="1.700" />
                  </g>
                </Line>
              </IconButton>
              <IconButton aria-label="Bing" $w={50} $h={38}>
                <BingIcon />
              </IconButton>
            </ToolGroup>
          </Toolbar>

          <Viewport>
            <Page>
              <Header>
                <HeaderRow>
                  <HeaderButton aria-label="Open menu"><Octicon name="bars" /></HeaderButton>
                  <LogoLink href="#home" aria-label="Home"><Octicon name="mark" size={40} /></LogoLink>
                  <Breadcrumb>
                    <a href="#owner">maximruban</a>
                    <span>/</span>
                    <a href="#repo">homework</a>
                  </Breadcrumb>
                  <SearchBox>
                    <SearchButton>
                      <Octicon name="search" />
                      <span>Type <Kbd>/</Kbd> to search</span>
                    </SearchButton>
                    <CommandButton aria-label="Command palette">
                      <Line w={1.8}><path d="m2 3.500 6.500 6.500L2 16.500M10.500 16.500h8" /></Line>
                    </CommandButton>
                  </SearchBox>
                  <Divider />
                  <HeaderButton $wide aria-label="Create new">
                    <Octicon name="plus" />
                    <Octicon name="caret" />
                  </HeaderButton>
                  <HeaderButton aria-label="Issues"><Octicon name="issue" /></HeaderButton>
                  <HeaderButton aria-label="Pull requests"><Octicon name="pull" /></HeaderButton>
                  <HeaderButton aria-label="Notifications"><Octicon name="inbox" /></HeaderButton>
                  <AvatarButton $size={42} aria-label="Account">
                    <Identicon size={40} />
                  </AvatarButton>
                </HeaderRow>
                <RepoNav>
                  {repoTabs.map(([icon, label]) => (
                    <RepoTab key={label} href={`#${icon}`} $active={label === "Code"}>
                      <Octicon name={icon} />
                      {label}
                    </RepoTab>
                  ))}
                </RepoNav>
              </Header>

              <Main>
                <PathLine>
                  <a href="#repo">homework</a> /
                </PathLine>
                <DropZone>
                  <svg width="40" height="40" viewBox="0 0 40 40" fill="none" stroke="currentColor" strokeWidth="2.400" strokeLinejoin="round" aria-hidden="true">
                    <path d="M7.500 2.500H24L34.500 13v22.500a2 2 0 0 1-2 2h-25a2 2 0 0 1-2-2v-31a2 2 0 0 1 2-2ZM24 2.500V11a2 2 0 0 0 2 2h8.500" />
                  </svg>
                  <DropTitle>Drag files here to add them to your repository</DropTitle>
                  <DropHint>
                    Or <label htmlFor="files">choose your files</label>
                    <input id="files" type="file" multiple />
                  </DropHint>
                </DropZone>

                <CommitRow onSubmit={(e) => e.preventDefault()}>
                  <Round><Identicon size={60} /></Round>
                  <CommitColumn>
                    <CommitBox>
                      <CommitTitle>Commit changes</CommitTitle>
                      <SummaryInput aria-label="Commit summary" placeholder="Add files via upload" />
                      <DescriptionInput aria-label="Commit description" placeholder="Add an optional extended description..." />
                    </CommitBox>
                    <Actions>
                      <ActionButton $primary type="submit">Commit changes</ActionButton>
                      <ActionButton type="button">Cancel</ActionButton>
                    </Actions>
                  </CommitColumn>
                </CommitRow>
              </Main>
            </Page>
            <ScrollTrack aria-hidden="true">
              <Arrow $up />
              <Thumb />
              <TrackRest />
              <Arrow />
            </ScrollTrack>
          </Viewport>
        </BrowserWindow>

        <Taskbar>
          <TaskButton $w={45} $center aria-label="Start"><WindowsIcon /></TaskButton>
          <TaskSearch>
            <Line size={22} w={1.5}>
              <circle cx="13" cy="7" r="6" />
              <path d="M8.500 11.500 1 19" />
            </Line>
            <input aria-label="Поиск" placeholder="Поиск" />
            <Hedgehog />
          </TaskSearch>
          <TaskButton $w={45} $center aria-label="Task view">
            <Line w={1.3}>
              <path d="M1 .5v2.500h11V.5M1 19.500V17h11v2.500M1 6.500h11v7H1ZM18 0v4M18 12v8" strokeLinecap="butt" />
              <path d="M16.500 6.500h3v3h-3z" fill="currentColor" stroke="none" />
            </Line>
          </TaskButton>
          <TaskGap $w={4} />
          <TaskButton $w={186} $open $active><EdgeIcon />Upload files · maxi...</TaskButton>
          <TaskButton $w={46} $center aria-label="Chrome"><ChromeIcon /></TaskButton>
          <TaskGap $w={6} />
          <TaskButton $w={176} $open><FolderIcon />C:\Users\Flamingo\...</TaskButton>
          <TaskButton $w={56} $center aria-label="Mail"><MailIcon /></TaskButton>
          <TaskButton $w={175} $open><TelegramIcon />Telegram (6139)</TaskButton>
          <TaskButton $w={56} $center aria-label="Яндекс"><YandexIcon /></TaskButton>
          <TaskButton $w={175} $open>
            <DiscordBadge><FaDiscord size={13} /></DiscordBadge>
            Друзья - Discord
          </TaskButton>
          <TaskGap $w={11} />
          <TaskButton $w={175} $open><YBrowserIcon />Яндекс — Яндекс Б...</TaskButton>
          <Tray>
            <IconButton $w={30} aria-label="Яндекс Браузер"><YBrowserIcon /></IconButton>
            <IconButton $w={30} $color="#eee" aria-label="Discord"><FaDiscord size={19} /></IconButton>
            <IconButton $w={30} aria-label="Telegram"><TelegramIcon /></IconButton>
            <IconButton $w={30} aria-label="NVIDIA"><NvidiaBadge><SiNvidia size={15} /></NvidiaBadge></IconButton>
            <IconButton $w={30} aria-label="Security"><DefenderIcon /></IconButton>
            <IconButton $w={30} $color="#d5d8de" aria-label="Audio device">
              <Line w={1.3}>
                <path d="M0 1h11M0 5h8M0 9h8M19 5v14l-5-4h-3V9.500h3Z" />
              </Line>
            </IconButton>
            <IconButton $w={30} $color="#d5d8de" aria-label="Network">
              <Line w={1.3}>
                <path d="M3 19A16 16 0 0 1 19 3M7 19A12 12 0 0 1 19 7.500M11 19a8 8 0 0 1 8-7.500" />
                <circle cx="17" cy="17.500" r="1.800" fill="#fff" stroke="none" />
              </Line>
            </IconButton>
            <IconButton $w={30} $color="#fff" aria-label="Battery">
              <Line w={1.4}>
                <path d="M6 5h11.500v10H4V9" />
                <path d="M7 7.500h9v5.500H7z" fill="currentColor" stroke="none" />
                <path d="M19.300 8v4M.8 4h4.400v2.500L3 8.500.8 6.500ZM2 2v2M4 2v2M3 8.500V15" strokeWidth="1.100" />
              </Line>
            </IconButton>
            <IconButton $w={30} $color="#fff" aria-label="Volume">
              <Line w={1.3}>
                <path d="M1 7.500h2.500L8 3.500v13l-4.500-4H1ZM10.500 7.500a4 4 0 0 1 0 5M13 5a7 7 0 0 1 0 10" />
                <path d="M16 3a10 10 0 0 1 0 14" opacity=".5" />
              </Line>
            </IconButton>
            <TrayText $w={46}>ENG</TrayText>
            <TrayText $w={50}>21:59</TrayText>
            <IconButton $w={48} $color="#fff" aria-label="Notifications">
              <Line w={1.4}><path d="M.8 1h18.400v15H12.500L10 18.800 7.500 16H.8Z" /></Line>
            </IconButton>
            <ShowDesktop aria-label="Show desktop" />
          </Tray>
        </Taskbar>
      </Desktop>
    </>
  );
}
